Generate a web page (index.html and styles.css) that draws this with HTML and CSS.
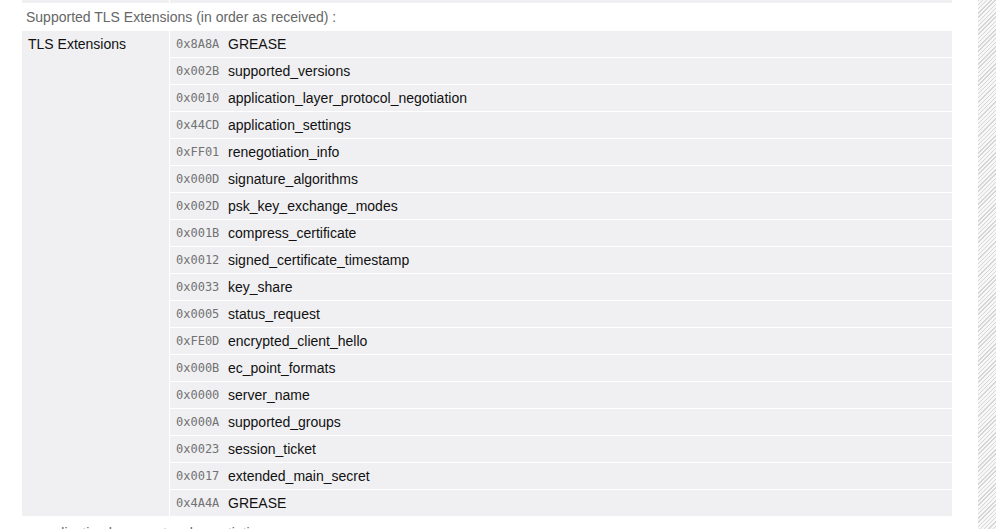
FILE: index.html
```html
<!DOCTYPE html>
<html>
<head>
<meta charset="utf-8">
<link rel="stylesheet" href="styles.css">
</head>
<body>
<div class="page">
  <main class="content">
    <div class="prev-row"><div class="prev-left"></div><div class="prev-right"></div></div>
    <div class="section-title">Supported TLS Extensions (in order as received) :</div>
    <div class="ext-table">
      <div class="label-cell">TLS Extensions</div>
      <div class="values">
        <div class="row"><span class="hex">0x8A8A</span><span class="name">GREASE</span></div>
        <div class="row"><span class="hex">0x002B</span><span class="name">supported_versions</span></div>
        <div class="row"><span class="hex">0x0010</span><span class="name">application_layer_protocol_negotiation</span></div>
        <div class="row"><span class="hex">0x44CD</span><span class="name">application_settings</span></div>
        <div class="row"><span class="hex">0xFF01</span><span class="name">renegotiation_info</span></div>
        <div class="row"><span class="hex">0x000D</span><span class="name">signature_algorithms</span></div>
        <div class="row"><span class="hex">0x002D</span><span class="name">psk_key_exchange_modes</span></div>
        <div class="row"><span class="hex">0x001B</span><span class="name">compress_certificate</span></div>
        <div class="row"><span class="hex">0x0012</span><span class="name">signed_certificate_timestamp</span></div>
        <div class="row"><span class="hex">0x0033</span><span class="name">key_share</span></div>
        <div class="row"><span class="hex">0x0005</span><span class="name">status_request</span></div>
        <div class="row"><span class="hex">0xFE0D</span><span class="name">encrypted_client_hello</span></div>
        <div class="row"><span class="hex">0x000B</span><span class="name">ec_point_formats</span></div>
        <div class="row"><span class="hex">0x0000</span><span class="name">server_name</span></div>
        <div class="row"><span class="hex">0x000A</span><span class="name">supported_groups</span></div>
        <div class="row"><span class="hex">0x0023</span><span class="name">session_ticket</span></div>
        <div class="row"><span class="hex">0x0017</span><span class="name">extended_main_secret</span></div>
        <div class="row"><span class="hex">0x4A4A</span><span class="name">GREASE</span></div>
      </div>
    </div>
    <div class="section-title next">application layer protocol negotiation :</div>
  </main>
  <aside class="hatch"></aside>
</div>
</body>
</html>
```

FILE: styles.css
```css
html, body {
  margin: 0;
  padding: 0;
  height: 100%;
  overflow: hidden;
  background: #fff;
}
body {
  font-family: "Liberation Sans", Arial, sans-serif;
  font-size: 14px;
  color: #111;
}
.page {
  display: flex;
  height: 529px;
}
.content {
  width: 930px;
  padding-left: 22px;
  margin-right: 26px;
  overflow: hidden;
}
.hatch {
  width: 18px;
  background-color: #f4f4f4;
  background-image: repeating-linear-gradient(135deg, #d6d6d6 0 1px, #f7f7f7 1px 3px);
}
.prev-row {
  display: flex;
  height: 3px;
}
.prev-left {
  width: 147px;
  background: #f0f0f2;
  border-right: 1px solid #fff;
}
.prev-right {
  flex: 1;
  background: #f0f0f2;
}
.section-title {
  height: 28px;
  line-height: 29px;
  padding-left: 4px;
  color: #666;
  font-size: 14px;
}
.section-title.next {
  margin-top: 7px;
  height: 20px;
  line-height: 20px;
  padding-left: 16px;
}
.ext-table {
  display: flex;
  background: #f0f0f2;
}
.label-cell {
  width: 141px;
  padding: 5px 0 0 6px;
  line-height: 16px;
  border-right: 1px solid #fff;
  color: #111;
}
.values {
  flex: 1;
  display: flex;
  flex-direction: column;
}
.row {
  display: flex;
  align-items: center;
  height: 26px;
  border-top: 1px solid #fff;
  padding-left: 6px;
}
.row:first-child {
  border-top: none;
}
.hex {
  font-family: "DejaVu Sans Mono", "Liberation Mono", monospace;
  font-size: 12px;
  color: #727272;
  width: 52px;
}
.name {
  color: #111;
  font-size: 14px;
}
```
